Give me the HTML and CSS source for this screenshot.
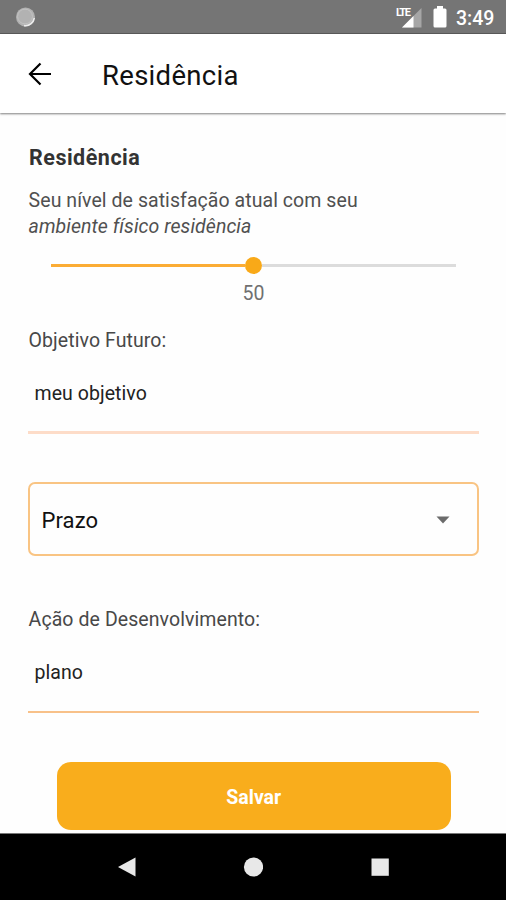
FILE: index.html
```html
<!DOCTYPE html>
<html lang="pt-BR">
<head>
<meta charset="utf-8">
<title>Residência</title>
<link rel="stylesheet" href="styles.css">
</head>
<body>
<div class="status">
  <svg class="status-dot" width="22" height="22" viewBox="0 0 22 22"><circle cx="10.500" cy="11" r="9.500" fill="#b2b2b2"/><path d="M19.300 12A9 9 0 0 1 9 19.600" fill="none" stroke="#eee" stroke-width="1.600"/><circle cx="10" cy="10.500" r="7.400" fill="none" stroke="#c2c2c2"/></svg>
  <div class="signal">
    <span class="lte">LTE</span>
    <svg width="20" height="20" viewBox="0 0 20 20"><path d="M0 19.500 19.500 0V19.500Z" fill="#a6a6a6"/><path d="M0 19.500 11.500 8V19.500Z" fill="#fff"/></svg>
  </div>
  <svg class="battery" width="14" height="22" viewBox="0 0 14 22"><path d="M4 0h6v2.5h2q1.5 0 1.5 1.5v16q0 1.5-1.5 1.5H2Q.5 21.500.5 20V4Q.5 2.500 2 2.500h2Z" fill="#fff"/></svg>
  <span class="clock">3:49</span>
</div>
<header class="appbar">
  <svg width="24" height="24" viewBox="0 0 24 24"><path d="M23 12H2M12.500 1.500 2 12l10.500 10.500" fill="none" stroke="#000" stroke-width="2.200"/></svg>
  <h1>Residência</h1>
</header>
<main>
  <h2>Residência</h2>
  <p class="question"><span class="q-first">Seu nível de satisfação atual com seu</span><br><em>ambiente físico residência</em></p>
  <div class="slider"><div class="fill"></div><div class="thumb"></div><div class="rest"></div></div>
  <div class="value">50</div>
  <div class="label">Objetivo Futuro:</div>
  <div class="field soft">meu objetivo</div>
  <div class="select"><span>Prazo</span><svg width="14" height="8" viewBox="0 0 14 8"><path d="M.5.500h13L7 7.500Z" fill="#6b6b6b"/></svg></div>
  <div class="label action">Ação de Desenvolvimento:</div>
  <div class="field plan">plano</div>
  <button class="save">Salvar</button>
</main>
<nav class="navbar">
  <svg viewBox="0 0 20 20"><path d="M1 10 18.500.500v19Z" fill="#e8e8e8"/></svg>
  <svg viewBox="0 0 20 20"><circle cx="10.500" cy="10" r="9.600" fill="#e8e8e8"/></svg>
  <svg viewBox="0 0 20 20"><path d="M1.500 1.500h17.300v17.300H1.500Z" fill="#e8e8e8"/></svg>
</nav>
</body>
</html>
```
FILE: styles.css
```css
* { box-sizing: border-box; }
body {
  margin: 0;
  width: 506px;
  height: 900px;
  overflow: hidden;
  display: flex;
  flex-direction: column;
  background: #fefefe;
  font-family: Roboto, sans-serif;
  color: #444;
}
svg { display: block; flex: none; }
.status {
  height: 34px;
  flex: none;
  display: flex;
  align-items: flex-start;
  background: #757575;
  border-bottom: 1px solid #5c5c5c;
}
.status-dot { margin: 6px 0 0 15px; }
.signal { margin: 8px 0 0 365px; position: relative; }
.lte {
  position: absolute;
  left: -6px;
  top: -1px;
  font-size: 11px;
  line-height: 11px;
  font-weight: 700;
  letter-spacing: -1.400px;
  color: #fff;
}
.battery { margin: 6px 0 0 11px; }
.clock {
  margin: 8px 0 0 9px;
  font-size: 19.500px;
  line-height: 22px;
  font-weight: 500;
  color: #fff;
}
.appbar {
  height: 79px;
  flex: none;
  display: flex;
  align-items: center;
  padding-left: 28px;
  background: #fff;
  box-shadow: 0 1px 2px rgba(0,0,0,.5);
}
.appbar h1 {
  margin: 4px 0 0 50px;
  font-size: 27.500px;
  line-height: 34px;
  font-weight: 400;
  letter-spacing: 0.300px;
  color: #111;
}
main {
  flex: none;
  height: 720px;
  padding: 32px 27px 0 28px;
  display: flex;
  flex-direction: column;
}
h2 {
  margin: 0 0 0 1px;
  font-size: 21.500px;
  line-height: 26px;
  font-weight: 700;
  letter-spacing: 0.500px;
  color: #333;
}
.question {
  margin: 17px 0 0 0.600px;
  font-size: 19.500px;
  line-height: 26px;
  letter-spacing: 0.060px;
  color: #505050;
}
.slider {
  margin: 16px 23px 0;
  height: 18px;
  display: flex;
  align-items: center;
}
.fill, .rest { flex: 1; height: 3px; }
.fill { background: #fbac35; }
.rest { background: #dcdcdc; }
.thumb { width: 17px; height: 17px; border-radius: 50%; background: #f9a918; }
.value {
  margin-top: 8px;
  text-align: center;
  font-size: 19.500px;
  line-height: 24px;
  color: #707070;
}
.label {
  margin: 22px 0 0 0.600px;
  font-size: 19.500px;
  line-height: 26px;
  letter-spacing: 0.080px;
  color: #484848;
}
.field {
  height: 81px;
  padding: 27px 6.500px 0;
  font-size: 19.500px;
  line-height: 26px;
  letter-spacing: 0.060px;
  color: #222;
  border-bottom: 2px solid #f8c189;
}
.soft { height: 80px; border-bottom: 3px solid #fddcc8; }
.select {
  margin: 48px 0 0;
  height: 74px;
  display: flex;
  align-items: center;
  justify-content: space-between;
  padding: 2px 27px 0 11.500px;
  border: 2px solid #f9c483;
  border-radius: 7px;
  font-size: 22px;
  letter-spacing: 0.100px;
  color: #111;
}
.label.action { margin-top: 51px; }
.plan { height: 80px; }
.save {
  margin: 49px 28px 0 28.500px;
  height: 68px;
  flex: none;
  border: 0;
  border-radius: 14px;
  background: #f9ad1c;
  color: #fff;
  font: 700 19.500px/26px Roboto, sans-serif;
  padding: 3px 0 0;
}
.navbar {
  flex: none;
  height: 67px;
  display: flex;
  justify-content: center;
  align-items: center;
  gap: 106.500px;
  background: #000;
  border-top: 1px solid #777;
}
.navbar svg { width: 20px; height: 20px; }
```
